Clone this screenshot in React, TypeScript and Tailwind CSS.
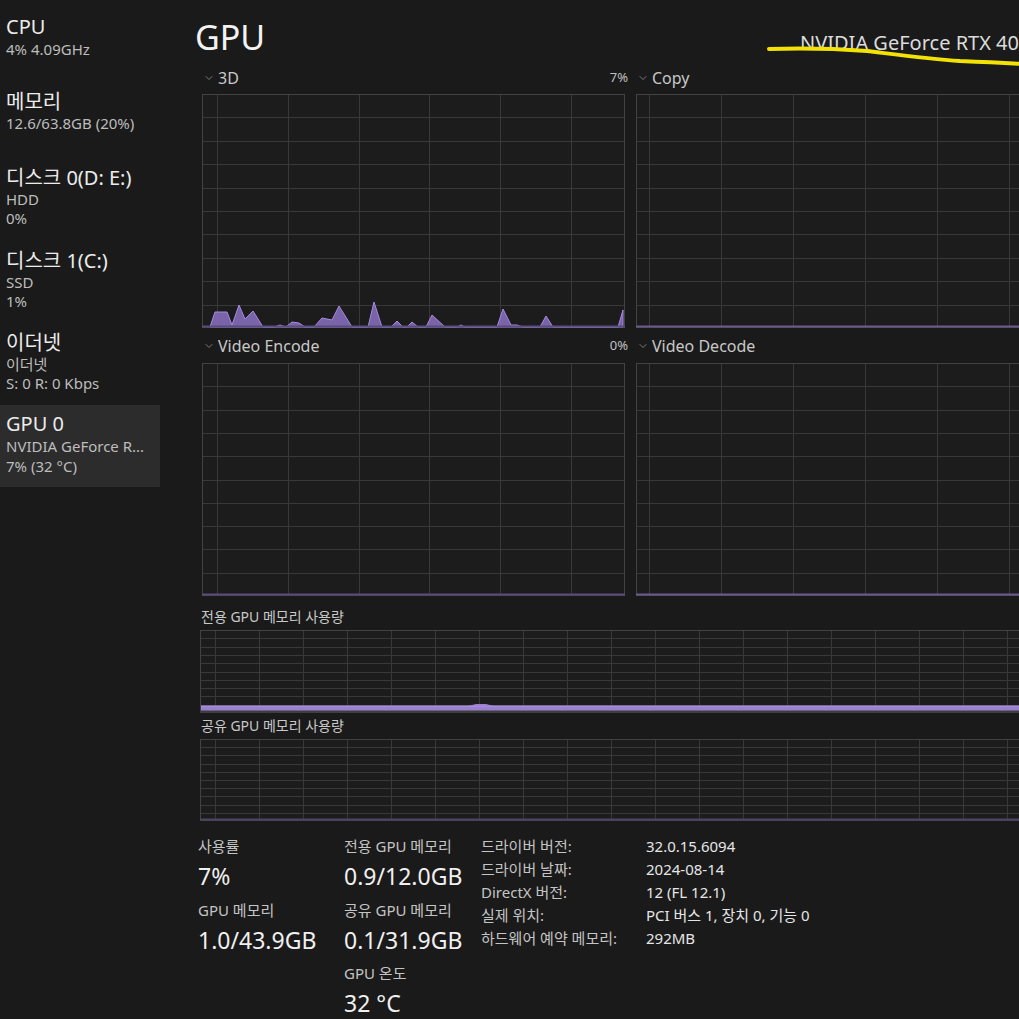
import React from 'react';
import { ChevronDown } from 'lucide-react';

const font = { fontFamily: '"Noto Sans", "Noto Sans CJK KR", sans-serif' };

const sideItems = [
  { title: '메모리', lines: ['12.6/63.8GB (20%)'], h: 'h-[76px]' },
  { title: '디스크 0(D: E:)', lines: ['HDD', '0%'], h: 'h-[83px]' },
  { title: '디스크 1(C:)', lines: ['SSD', '1%'], h: 'h-[82px]' },
  { title: '이더넷', lines: ['이더넷', 'S: 0 R: 0 Kbps'], h: 'h-[82px]' },
];

// spikes of the 3D engine history, graph coords (w 423, h 234)
const usage: [number, number][] = [
  [8, 233], [13, 218], [25, 218], [30, 231], [37, 211], [43, 225], [51, 217], [61, 233],
  [72, 233], [78, 231], [84, 233], [90, 228], [97, 229], [103, 233], [112, 233], [120, 224],
  [130, 226], [137, 212], [150, 233], [166, 233], [172, 208], [180, 233], [189, 233],
  [195, 227], [201, 233], [205, 233], [210, 228], [216, 233], [224, 233], [230, 221],
  [243, 233], [255, 233], [259, 231], [263, 233], [295, 233], [301, 215], [309, 231],
  [315, 231], [321, 233], [338, 233], [344, 222], [351, 233], [416, 233], [421, 216], [421, 233],
];

type GridProps = {
  w: number;
  h: number;
  step: number;
  offset: number;
  rows: number;
  children?: React.ReactNode;
  base?: string;
};

const Grid = ({ w, h, step, offset, rows, children, base = '#5a4c7c' }: GridProps) => {
  const xs: number[] = [];
  for (let x = offset; x < w - 2; x += step) xs.push(Math.round(x) + 0.5);
  const ys: number[] = [];
  for (let i = 1; i < rows; i++) ys.push(Math.round((h * i) / rows) + 0.5);
  return (
    <svg width={w} height={h} className="block shrink-0">
      <rect x={0.5} y={0.5} width={w - 1} height={h - 1} fill="#1c1c1c" stroke="#434343" />
      {xs.map((x) => (
        <line key={'x' + x} x1={x} y1={1} x2={x} y2={h - 1} stroke="#383838" />
      ))}
      {ys.map((y) => (
        <line key={'y' + y} x1={1} y1={y} x2={w - 1} y2={y} stroke="#383838" />
      ))}
      {children}
      <line x1={0} y1={h - 1.5} x2={w} y2={h - 1.5} stroke={base} strokeWidth={2} />
    </svg>
  );
};

const GraphHead = ({ label, value, className }: { label: string; value?: string; className: string }) => (
  <div className={`flex items-center justify-between w-[423px] ${className}`}>
    <div className="flex items-center gap-[3px] text-[16px] text-[#c8c8c8]">
      <ChevronDown size={12} strokeWidth={1.5} className="text-[#9a9a9a] ml-[1px]" />
      <span>{label}</span>
    </div>
    {value && <span className="text-[13px] text-[#c0c0c0] mr-[-3px]">{value}</span>}
  </div>
);

const Stat = ({ label, value, className = '' }: { label: string; value: string; className?: string }) => (
  <div className={className}>
    <div className="text-[15px] leading-[20px] text-[#c4c4c4]">{label}</div>
    <div className="text-[23px] leading-[30px] mt-[5px] text-[#f0f0f0]">{value}</div>
  </div>
);

const details = [
  ['드라이버 버전:', '32.0.15.6094'],
  ['드라이버 날짜:', '2024-08-14'],
  ['DirectX 버전:', '12 (FL 12.1)'],
  ['실제 위치:', 'PCI 버스 1, 장치 0, 기능 0'],
  ['하드웨어 예약 메모리:', '292MB'],
];

export default function App() {
  const poly = usage.map(([x, y]) => `${x},${y}`).join(' ');
  return (
    <div className="relative w-[1019px] h-[1019px] overflow-hidden bg-[#1a1a1a] flex" style={font}>
      {/* sidebar */}
      <aside className="w-[160px] shrink-0 pt-[8px]">
        <div className="h-[74px] pt-[7px] px-[6px]">
          <div className="text-[20px] leading-[24px] text-[#ececec]">CPU</div>
          <div className="text-[15px] leading-[20px] text-[#bdbdbd]">4% 4.09GHz</div>
        </div>
        {sideItems.map((item) => (
          <div key={item.title} className={`${item.h} pt-[8px] px-[6px]`}>
            <div className="text-[20px] leading-[24px] text-[#ececec]">{item.title}</div>
            {item.lines.map((l) => (
              <div key={l} className="text-[15px] leading-[19px] text-[#bdbdbd]">
                {l}
              </div>
            ))}
          </div>
        ))}
        <div className="h-[82px] pt-[7px] px-[6px] bg-[#2c2c2c]">
          <div className="text-[20px] leading-[24px] text-[#ececec]">GPU 0</div>
          <div className="text-[15px] leading-[20px] text-[#bdbdbd] whitespace-nowrap">NVIDIA GeForce R...</div>
          <div className="text-[15px] leading-[20px] text-[#bdbdbd]">7% (32 °C)</div>
        </div>
      </aside>

      {/* main */}
      <main className="flex-1 pl-[35px] min-w-0">
        <div className="h-[62px] flex items-start justify-between">
          <h1 className="text-[34px] leading-[40px] pt-[17px] text-[#f2f2f2]">GPU</h1>
          <div className="text-[20px] leading-[26px] pt-[30px] text-[#dcdcdc] whitespace-nowrap">
            NVIDIA GeForce RTX 40
          </div>
        </div>

        <div className="ml-[7px] flex gap-[11px]">
          <div className="shrink-0">
            <GraphHead label="3D" value="7%" className="h-[32px]" />
            <Grid w={423} h={234} step={70.8} offset={15} rows={10}>
              <polygon points={poly} fill="#8a70c2" fillOpacity={0.85} stroke="#a58be0" strokeWidth={1} />
            </Grid>
            <GraphHead label="Video Encode" value="0%" className="h-[35px]" />
            <Grid w={423} h={233} step={70.8} offset={15} rows={10} />
          </div>
          <div className="shrink-0">
            <GraphHead label="Copy" className="h-[32px]" />
            <Grid w={423} h={234} step={72} offset={13} rows={10} base="#6a5a90" />
            <GraphHead label="Video Decode" className="h-[35px]" />
            <Grid w={423} h={233} step={72} offset={13} rows={10} base="#6a5a90" />
          </div>
        </div>

        <div className="h-[34px] flex items-end pb-[5px] ml-[6px] text-[14px] leading-[16px] text-[#c8c8c8] whitespace-nowrap">
          전용 GPU 메모리 사용량
        </div>
        <div className="ml-[5px]">
          <Grid w={860} h={83} step={44} offset={15} rows={10} base="#3e3e3e">
            <rect x={1} y={76} width={859} height={6} fill="#9a80cf" />
            <line x1={1} y1={76} x2={860} y2={76} stroke="#b39be6" />
            <path d="M268 76 L276 74 L286 74 L294 76 Z" fill="#9a80cf" />
          </Grid>
        </div>
        <div className="h-[26px] flex items-center ml-[6px] text-[14px] leading-[16px] text-[#c8c8c8] whitespace-nowrap">
          공유 GPU 메모리 사용량
        </div>
        <div className="ml-[5px]">
          <Grid w={860} h={82} step={44} offset={15} rows={10} base="#4d4466" />
        </div>

        {/* stats */}
        <div className="flex items-start mt-[15px] ml-[3px] whitespace-nowrap">
          <div className="w-[146px] shrink-0">
            <Stat label="사용률" value="7%" />
            <Stat label="GPU 메모리" value="1.0/43.9GB" className="mt-[9px]" />
          </div>
          <div className="w-[137px] shrink-0">
            <Stat label="전용 GPU 메모리" value="0.9/12.0GB" />
            <Stat label="공유 GPU 메모리" value="0.1/31.9GB" className="mt-[9px]" />
            <Stat label="GPU 온도" value="32 °C" className="mt-[8px]" />
          </div>
          <div className="grid grid-cols-[165px_auto] content-start text-[15px] leading-[23px] -mt-[1px]">
            {details.map(([k, v]) => (
              <React.Fragment key={k}>
                <div className="text-[#c4c4c4]">{k}</div>
                <div className="text-[#e6e6e6]">{v}</div>
              </React.Fragment>
            ))}
          </div>
        </div>
      </main>

      {/* yellow highlight stroke drawn over the title */}
      <svg className="absolute left-[760px] top-[40px]" width={270} height={32}>
        <path
          d="M9 9 C 40 8, 80 9, 107 11 C 140 15, 170 19, 200 21 C 225 22, 245 23, 262 24"
          stroke="#f2e205"
          strokeWidth={4}
          strokeLinecap="round"
          fill="none"
        />
      </svg>
    </div>
  );
}
